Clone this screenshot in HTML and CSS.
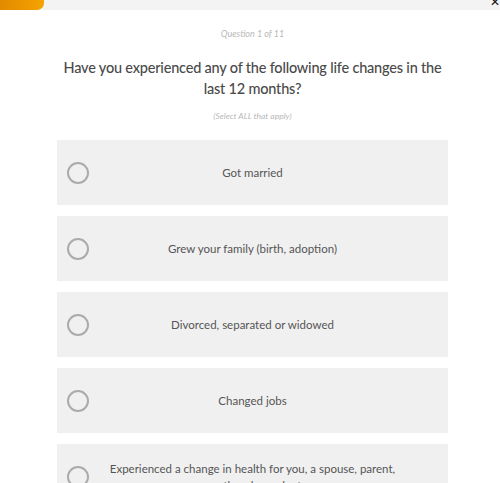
FILE: index.html
```html
<!DOCTYPE html>
<html>
<head>
<meta charset="utf-8">
<link rel="stylesheet" href="styles.css">
</head>
<body>
<div class="topbar">
  <div class="progress"></div>
  <span class="close">&#x2715;</span>
</div>
<main class="survey">
  <p class="counter">Question 1 of 11</p>
  <h1 class="question">Have you experienced any of the following life changes in the last 12 months?</h1>
  <p class="hint">(Select ALL that apply)</p>
  <ul class="options">
    <li class="option"><span class="radio"></span><span class="label">Got married</span><span class="spacer"></span></li>
    <li class="option"><span class="radio"></span><span class="label">Grew your family (birth, adoption)</span><span class="spacer"></span></li>
    <li class="option"><span class="radio"></span><span class="label">Divorced, separated or widowed</span><span class="spacer"></span></li>
    <li class="option"><span class="radio"></span><span class="label">Changed jobs</span><span class="spacer"></span></li>
    <li class="option"><span class="radio"></span><span class="label">Experienced a change in health for you, a spouse, parent, or other dependent</span><span class="spacer"></span></li>
  </ul>
</main>
</body>
</html>
```
FILE: styles.css
```css
html, body {
  margin: 0;
  padding: 0;
  background: #fff;
  font-family: Lato, "Open Sans", sans-serif;
  overflow: hidden;
}
.topbar {
  position: relative;
  height: 10px;
  background: #f3f3f3;
}
.progress {
  width: 44px;
  height: 10px;
  background: linear-gradient(90deg, #e38a00, #f5a300);
  border-radius: 0 0 7px 0;
}
.close {
  position: absolute;
  right: 0;
  top: -4px;
  font-size: 12px;
  line-height: 12px;
  color: #111;
  font-family: "DejaVu Sans", sans-serif;
}
.survey {
  width: 391px;
  margin: 0 auto;
  padding-left: 5px;
  text-align: center;
}
.counter {
  margin: 18px 0 0;
  font-size: 9px;
  line-height: 12px;
  font-style: italic;
  color: #b8b8b8;
}
.question {
  margin: 17px 0 0;
  font-size: 14.5px;
  line-height: 21px;
  letter-spacing: -0.2px;
  font-weight: 500;
  color: #4a4a4a;
}
.hint {
  margin: 11px 0 0;
  font-size: 8.5px;
  line-height: 12px;
  font-style: italic;
  color: #b8b8b8;
}
.options {
  list-style: none;
  margin: 18px 0 0;
  padding: 0;
  display: flex;
  flex-direction: column;
  gap: 11px;
}
.option {
  display: grid;
  grid-template-columns: 22px 1fr 22px;
  column-gap: 16px;
  align-items: center;
  min-height: 65px;
  padding: 0 10px;
  background: #f0f0f0;
  box-sizing: border-box;
}
.radio {
  width: 22px;
  height: 22px;
  box-sizing: border-box;
  border: 2px solid #ababab;
  border-radius: 50%;
}
.label {
  font-size: 11.5px;
  line-height: 17px;
  color: #555;
  padding: 10px 0;
}
```
